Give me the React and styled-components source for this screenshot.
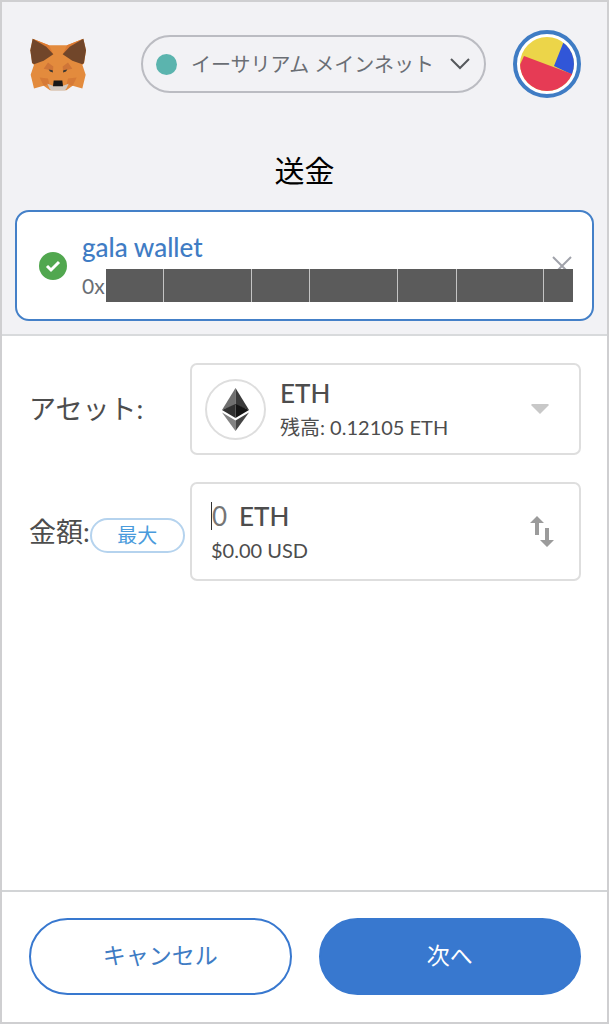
import React from "react";
import styled, { createGlobalStyle } from "styled-components";

const Global = createGlobalStyle`
  * { box-sizing: border-box; }
  body { margin: 0; background: #c9c9cb; }
  body, button, input, select {
    font-family: Lato, "Noto Sans CJK JP", sans-serif;
  }
  button, select, input { margin: 0; padding: 0; border: 0; background: none; color: inherit; }
  h1, p { margin: 0; }
  svg { display: block; }
`;

const Popup = styled.div`
  min-height: 100vh;
  display: flex;
  flex-direction: column;
  border: 2px solid #cfcfd1;
  background: #fff;
  color: #4d4d4d;
`;

const Top = styled.div`
  background: #f2f2f5;
  border-bottom: 2px solid #d8dadc;
  padding: 28px 13px 13px;
`;

const Header = styled.header`
  display: flex;
  align-items: center;
  justify-content: space-between;
  padding: 0 13px 0 15px;
`;

const Network = styled.label`
  display: flex;
  align-items: center;
  gap: 14px;
  width: 345px;
  height: 58px;
  margin-left: 28px;
  padding: 0 14px 0 13px;
  border: 2px solid #bbbcc2;
  border-radius: 29px;
  color: #6a6e74;
`;

const Dot = styled.span`
  flex: none;
  width: 21px;
  height: 21px;
  border-radius: 50%;
  background: #5bb4ae;
`;

const NetworkSelect = styled.select`
  flex: 1;
  min-width: 0;
  height: 32px;
  appearance: none;
  font-size: 20px;
  line-height: 32px;
`;

const Account = styled.button`
  width: 68px;
  height: 68px;
`;

const Title = styled.h1`
  margin-top: 48px;
  text-align: center;
  font-size: 30px;
  line-height: 48px;
  font-weight: 400;
  color: #000;
`;

const Recipient = styled.div`
  position: relative;
  display: flex;
  align-items: center;
  gap: 14px;
  margin-top: 16px;
  height: 111px;
  padding: 0 19px 0 22px;
  border: 2px solid #4480c8;
  border-radius: 14px;
  background: #fff;
`;

const RecipientText = styled.div`
  position: relative;
  z-index: 1;
  flex: 1;
  display: flex;
  flex-direction: column;
  gap: 4px;
`;

const Name = styled.p`
  font-size: 26px;
  line-height: 36px;
  font-weight: 500;
  color: #3f7cc4;
`;

const Address = styled.p`
  display: flex;
  align-items: center;
  gap: 1px;
  font-size: 21px;
  color: #6a6e74;
`;

const Redaction = styled.span`
  flex: 1;
  display: flex;
  gap: 1px;
  height: 33px;
  background: #c4c4c4;
`;

const Block = styled.span`
  flex: ${(p) => p.$units};
  background: #5b5b5b;
`;

const Clear = styled.button`
  position: absolute;
  right: 20px;
  top: 44px;
`;

const Form = styled.main`
  flex: 1;
  display: flex;
  flex-direction: column;
  gap: 27px;
  padding: 27px 26px 27px 27px;
`;

const Row = styled.div`
  display: grid;
  grid-template-columns: 161px 1fr;
  align-items: center;
`;

const LabelCell = styled.div`
  display: flex;
  align-items: center;
  font-size: 27px;
  line-height: 40px;
  white-space: nowrap;
`;

const Max = styled.button`
  width: 95px;
  height: 35px;
  margin-top: 8px;
  flex: none;
  border: 2px solid #b5d3ee;
  border-radius: 18px;
  font-size: 20px;
  line-height: 29px;
  color: #4a9bdc;
`;

const Field = styled.div`
  display: flex;
  align-items: center;
  width: 100%;
  height: ${(p) => p.$height};
  padding: 0 ${(p) => p.$right} 0 ${(p) => p.$left};
  gap: 14px;
  border: 2px solid #dedede;
  border-radius: 7px;
  background: #fff;
  text-align: left;
`;

const TokenBadge = styled.span`
  display: grid;
  place-items: center;
  flex: none;
  width: 61px;
  height: 61px;
  border: 2px solid #dedede;
  border-radius: 50%;
`;

const FieldText = styled.span`
  flex: 1;
  display: flex;
  flex-direction: column;
`;

const Primary = styled.span`
  display: flex;
  align-items: center;
  font-size: 26px;
  line-height: 36px;
  font-weight: 500;
`;

const Secondary = styled.span`
  font-size: 20px;
  line-height: 32px;
`;

const AmountInput = styled.input`
  width: 28px;
  height: 28px;
  font-size: 26px;
  line-height: 28px;
  border-left: 1px solid #333;
  &::placeholder { color: #757575; opacity: 1; }
  &:focus { outline: none; }
`;

const Footer = styled.footer`
  display: grid;
  grid-template-columns: 1fr 1fr;
  gap: 27px;
  padding: 26px 26px 27px 27px;
  border-top: 2px solid #d2d4d6;
`;

const Action = styled.button`
  height: 77px;
  padding-bottom: 4px;
  border: 2px solid #3878cf;
  border-radius: 39px;
  font-size: 23px;
  line-height: 32px;
  background: ${(p) => (p.$filled ? "#3878cf" : "#fff")};
  color: ${(p) => (p.$filled ? "#fff" : "#3f7cc4")};
`;

const Fox = () => (
  <svg width="56" height="53" viewBox="91 114 168 158" role="img" aria-label="MetaMask">
    <path d="M99 116 148 135H202L251 116 259 150 253 190 248 194 258 224 248 265 219 257 200 270H151L132 257 103 265 93 224 103 194 98 190 92 150Z" fill="#e38b3d" />
    <path d="M99 116 148 135 161 162ZM251 116 202 135 189 162Z" fill="#dd7b33" />
    <path d="M99 116 140 140 161 162 132 182 103 192 97 188 92 150Z" fill="#71462a" />
    <path d="M251 116 210 140 189 162 218 182 248 192 253 188 259 150Z" fill="#71462a" />
    <path d="M145 187 132 206 160 212 161 199ZM205 187 218 206 190 212 189 199Z" fill="#cf7538" />
    <path d="M103 265 132 257 120 232 145 235 149 252 132 257ZM248 265 219 257 231 232 205 235 201 252 219 257Z" fill="#d67a36" />
    <path d="M147 208 159 210 160 217 151 214ZM203 208 191 210 190 217 199 214Z" fill="#3b3733" />
    <path d="M143 251 160 257H190L207 251 200 266 195 271H155L150 266Z" fill="#d2c8bf" />
    <path d="M162 241H188L190 258H160Z" fill="#171717" />
  </svg>
);

export default function App() {
  return (
    <>
      <Global />
      <Popup>
        <Top>
          <Header>
            <Fox />
            <Network>
              <Dot />
              <NetworkSelect aria-label="ネットワーク">
                <option>イーサリアム メインネット</option>
              </NetworkSelect>
              <svg width="20" height="12" viewBox="0 0 20 12" fill="none" stroke="#55585c" strokeWidth="2">
                <path d="M1 1 10 10 19 1" />
              </svg>
            </Network>
            <Account aria-label="アカウント">
              <svg width="68" height="68" viewBox="0 0 68 68">
                <circle cx="34" cy="34" r="32" fill="#fff" stroke="#3f7cc4" strokeWidth="4" />
                <clipPath id="disc"><circle cx="34" cy="34" r="27" /></clipPath>
                <g clipPath="url(#disc)">
                  <path d="M0 0H68V68H0Z" fill="#ecd549" />
                  <path d="M53 6 41 36 62 46 68 34V6Z" fill="#3156d8" />
                  <path d="M11 26 64 46V68H0V50Z" fill="#e63b55" />
                </g>
              </svg>
            </Account>
          </Header>
          <Title>送金</Title>
          <Recipient>
            <svg width="29" height="29" viewBox="0 0 29 29">
              <circle cx="14" cy="15" r="14" fill="#51a74f" />
              <path d="M8 15 12 19 20 11" fill="none" stroke="#fff" strokeWidth="3" />
            </svg>
            <RecipientText>
              <Name>gala wallet</Name>
              <Address>
                0x
                <Redaction>
                  {[2, 3, 2, 3, 2, 3, 1].map((units, i) => (
                    <Block key={i} $units={units} />
                  ))}
                </Redaction>
              </Address>
            </RecipientText>
            <Clear aria-label="消去">
              <svg width="20" height="20" viewBox="0 0 20 20" stroke="#a0a2aa" strokeWidth="2">
                <path d="M1 1 19 19M19 1 1 19" />
              </svg>
            </Clear>
          </Recipient>
        </Top>

        <Form>
          <Row>
            <LabelCell><span id="asset">アセット:</span></LabelCell>
            <Field as="button" type="button" aria-labelledby="asset" aria-haspopup="listbox" $height="92px" $left="13px" $right="30px">
              <TokenBadge>
                <svg width="27" height="43" viewBox="0 0 54 86">
                  <path d="M27 0V34L0 44Z" fill="#6f6f6f" />
                  <path d="M27 0V34L54 44Z" fill="#3a3a3a" />
                  <path d="M0 44 27 32V60Z" fill="#303030" />
                  <path d="M54 44 27 32V60Z" fill="#141414" />
                  <path d="M0 49 27 65V86Z" fill="#828282" />
                  <path d="M54 49 27 65V86Z" fill="#454545" />
                </svg>
              </TokenBadge>
              <FieldText>
                <Primary>ETH</Primary>
                <Secondary>残高: 0.12105 ETH</Secondary>
              </FieldText>
              <svg width="18" height="10" viewBox="0 0 18 10"><path d="M1 0H17L18 1 9 10 0 1Z" fill="#c8c8c8" /></svg>
            </Field>
          </Row>
          <Row>
            <LabelCell>
              <label htmlFor="amount">金額:</label>
              <Max type="button">最大</Max>
            </LabelCell>
            <Field $height="99px" $left="19px" $right="25px">
              <FieldText>
                <Primary>
                  <AmountInput id="amount" placeholder="0" />
                  ETH
                </Primary>
                <Secondary>$0.00 USD</Secondary>
              </FieldText>
              <button type="button" aria-label="通貨を切り替える">
                <svg width="24" height="32" viewBox="0 0 24 32" fill="#9b9b9b">
                  <path d="M7 0 14 7H9V19H5V7H0Z" />
                  <path d="M17 31 10 24H15V12H19V24H24Z" />
                </svg>
              </button>
            </Field>
          </Row>
        </Form>

        <Footer>
          <Action type="button">キャンセル</Action>
          <Action type="button" $filled>次へ</Action>
        </Footer>
      </Popup>
    </>
  );
}
